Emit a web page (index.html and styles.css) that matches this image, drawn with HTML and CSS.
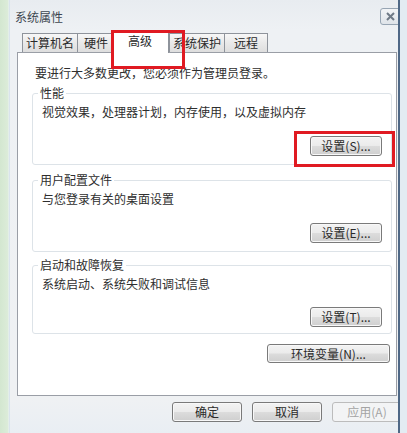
FILE: index.html
```html
<!DOCTYPE html>
<html lang="zh-CN">
<head>
<meta charset="utf-8">
<title>系统属性</title>
<link rel="stylesheet" href="styles.css">
</head>
<body>
<div class="screen">
  <div class="edge-left"></div>
  <div class="window">
    <div class="titlebar">
      <span class="title">系统属性</span>
      <span class="close"><svg width="9" height="9" viewBox="0 0 9 9"><path d="M1 1L8 8M8 1L1 8" stroke="#6f7a86" stroke-width="2" fill="none"/></svg></span>
    </div>
    <div class="body">
      <div class="tabs">
        <span class="tab tab--pad3">计算机名</span>
        <span class="tab tab--pad6">硬件</span>
        <span class="tab tab--active tab--marked">高级</span>
        <span class="tab tab--pad3">系统保护</span>
        <span class="tab tab--pad9">远程</span>
      </div>
      <div class="panel">
        <p class="intro">要进行大多数更改，您必须作为管理员登录。</p>
        <fieldset class="group">
          <legend>性能</legend>
          <p class="desc">视觉效果，处理器计划，内存使用，以及虚拟内存</p>
          <div class="row"><button class="btn btn--set btn--marked">设置(S)...</button></div>
        </fieldset>
        <fieldset class="group">
          <legend>用户配置文件</legend>
          <p class="desc">与您登录有关的桌面设置</p>
          <div class="row"><button class="btn btn--set">设置(E)...</button></div>
        </fieldset>
        <fieldset class="group group--last">
          <legend>启动和故障恢复</legend>
          <p class="desc">系统启动、系统失败和调试信息</p>
          <div class="row"><button class="btn btn--set">设置(T)...</button></div>
        </fieldset>
        <div class="row row--env"><button class="btn btn--env">环境变量(N)...</button></div>
      </div>
      <div class="footer">
        <button class="btn btn--dlg">确定</button>
        <button class="btn btn--dlg">取消</button>
        <button class="btn btn--dlg btn--disabled">应用(A)</button>
      </div>
    </div>
  </div>
  <div class="edge-right"></div>
</div>
</body>
</html>
```
FILE: styles.css
```css
* { box-sizing: border-box; }
html, body { margin: 0; padding: 0; }
body {
  width: 407px;
  height: 433px;
  overflow: hidden;
  font-family: "Noto Sans CJK SC", "Microsoft YaHei", sans-serif;
  font-size: 12px;
  color: #2e2e2e;
  background: #eef1f4;
}
.screen {
  display: flex;
  width: 407px;
  height: 433px;
}
.edge-left {
  width: 10px;
  flex: none;
  background: linear-gradient(to right, #d3e7d0 0, #dcecd9 8px, #eaf1f6 9px, #c9d6e2 10px);
}
.window {
  width: 390px;
  flex: none;
  height: 433px;
  overflow: hidden;
  background: linear-gradient(#e8ecf0, #eef1f4 30px, #eff1f3 400px, #e9eef3 433px);
  border-right: 2px solid #4f6886;
  display: flex;
  flex-direction: column;
}
.edge-right {
  flex: 1;
  background: #e3ebf2;
}
.titlebar {
  height: 30px;
  flex: none;
  display: flex;
  justify-content: space-between;
  align-items: flex-start;
  padding-left: 5px;
}
.title {
  margin-top: 10px;
  line-height: 14px;
  color: #3d4650;
}
.close {
  margin-top: 8px;
  margin-right: -8px;
  width: 26px;
  height: 17px;
  border: 1px solid #97a5b3;
  border-radius: 3px;
  background: linear-gradient(#f2f4f6, #dfe4e9);
  display: flex;
  align-items: center;
  padding-left: 5px;
}
.body {
  flex: 1;
  display: flex;
  flex-direction: column;
  padding: 0 1px 0 7px;
}
.tabs {
  height: 22px;
  flex: none;
  display: flex;
  align-items: flex-end;
  padding-left: 5px;
  position: relative;
  z-index: 2;
}
.tab {
  height: 19px;
  line-height: 17px;
  border: 1px solid #8e939b;
  border-bottom: none;
  background: linear-gradient(#f7f7f7, #e9e9e9 50%, #dedede);
  color: #2a2a2a;
  margin-right: -1px;
  white-space: nowrap;
}
.tab--pad3 { padding: 0 3px; }
.tab--pad6 { padding: 0 6px; }
.tab--pad9 { padding: 0 9px; }
.tab--active {
  height: 23px;
  line-height: 19px;
  padding: 0 16px;
  margin: 0 -2px -1px -3px;
  background: #ffffff;
  position: relative;
  z-index: 3;
}
.tab--active + .tab { margin-left: 2px; }
.tab--marked::after {
  content: "";
  position: absolute;
  left: -1px;
  top: -1px;
  width: 68px;
  height: 33px;
  border: 3px solid #e01a22;
}
.panel {
  height: 344px;
  flex: none;
  background: #ffffff;
  border: 1px solid #9a9ea6;
  padding: 13px 4px 0 14px;
  display: flex;
  flex-direction: column;
  position: relative;
  z-index: 1;
}
.intro {
  margin: 0;
  padding-left: 3px;
  line-height: 14px;
}
.group {
  margin: 6px 0 0 0;
  padding: 0 9px 8px 9px;
  border: 1px solid #dde3e8;
  border-radius: 3px;
  min-width: 0;
}
.group + .group { margin-top: 8px; }
.group--last { margin-top: 6px !important; padding-bottom: 6px; }
.group legend {
  padding: 0 2px;
  margin-left: -4px;
  line-height: 14px;
}
.desc {
  margin: 5px 0 0 0;
  line-height: 14px;
}
.row {
  display: flex;
  justify-content: flex-end;
  margin-top: 17px;
}
.group--last .row { margin-top: 16px; }
.row--env {
  margin-top: 10px;
  margin-right: 2px;
}
.btn {
  font-family: inherit;
  font-size: 12px;
  color: #2a2a2a;
  border: 1px solid #7a7a7a;
  border-radius: 3px;
  background: linear-gradient(#f3f3f3, #ebebeb 48%, #dcdcdc 52%, #cfcfcf);
  box-shadow: inset 0 0 0 1px #f8f8f8;
  padding: 0;
  height: 20px;
  line-height: 16px;
  white-space: nowrap;
  position: relative;
}
.btn--set { width: 72px; }
.btn--env { width: 123px; height: 19px; }
.btn--marked::after {
  content: "";
  position: absolute;
  left: -17px;
  top: -6px;
  width: 95px;
  height: 30px;
  border: 3px solid #e01a22;
}
.footer {
  display: flex;
  justify-content: flex-end;
  gap: 10px;
  padding-top: 6px;
}
.btn--dlg { width: 70px; height: 20px; }
.btn--dlg:last-child { margin-right: -5px; }
.btn--disabled {
  color: #a4a4a4;
  border-color: #bcbcbc;
  background: #f3f4f5;
  box-shadow: none;
}
```
